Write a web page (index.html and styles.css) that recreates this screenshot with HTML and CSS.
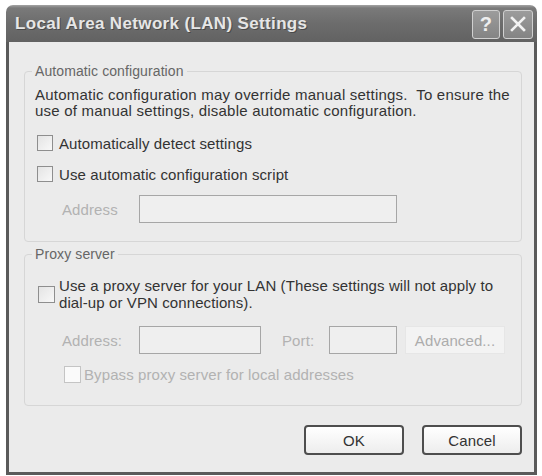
FILE: index.html
```html
<!DOCTYPE html>
<html lang="en">
<head>
<meta charset="utf-8">
<title>Local Area Network (LAN) Settings</title>
<link rel="stylesheet" href="styles.css">
</head>
<body>
<div class="window">
  <div class="titlebar">
    <span class="title">Local Area Network (LAN) Settings</span>
    <div class="caption-buttons">
      <span class="cap-btn cap-help">?</span>
      <span class="cap-btn cap-close">
        <svg width="18" height="18" viewBox="0 0 18 18"><path d="M3 3 L15 15 M15 3 L3 15" stroke="#f2f2f2" stroke-width="2.6" stroke-linecap="square"/></svg>
      </span>
    </div>
  </div>
  <div class="client">
    <fieldset class="group group-auto">
      <legend>Automatic configuration</legend>
      <p class="desc">Automatic configuration may override manual settings.&nbsp; To ensure the<br>use of manual settings, disable automatic configuration.</p>
      <label class="check check-detect"><span class="box"></span><span>Automatically detect settings</span></label>
      <label class="check check-script"><span class="box"></span><span>Use automatic configuration script</span></label>
      <div class="field-row row-script">
        <span class="lbl disabled lbl-addr">Address</span>
        <span class="input input-script"></span>
      </div>
    </fieldset>
    <fieldset class="group group-proxy">
      <legend>Proxy server</legend>
      <label class="check check-proxy"><span class="box"></span><span>Use a proxy server for your LAN (These settings will not apply to<br>dial-up or VPN connections).</span></label>
      <div class="field-row row-proxy">
        <span class="lbl disabled lbl-addr">Address:</span>
        <span class="input input-addr"></span>
        <span class="lbl disabled lbl-port">Port:</span>
        <span class="input input-port"></span>
        <span class="btn-adv">Advanced...</span>
      </div>
      <label class="check check-bypass disabled"><span class="box box-off"></span><span>Bypass proxy server for local addresses</span></label>
    </fieldset>
    <div class="buttons">
      <span class="btn">OK</span>
      <span class="btn">Cancel</span>
    </div>
  </div>
</div>
</body>
</html>
```

FILE: styles.css
```css
html, body {
  margin: 0;
  padding: 0;
  background: #ffffff;
}

body {
  font-family: "Liberation Sans", Arial, sans-serif;
  font-size: 15px;
  letter-spacing: 0.1px;
  color: #333333;
}

.window {
  margin: 5px 0 0 6px;
  width: 531px;
  height: 470px;
  display: flex;
  flex-direction: column;
}

.titlebar {
  flex: none;
  height: 37px;
  box-sizing: border-box;
  border-radius: 7px 7px 0 0;
  background: linear-gradient(to bottom, #a4a4a4 0, #7a7a7a 3px, #6c6c6c 50%, #626262 100%);
  display: flex;
  align-items: center;
  justify-content: space-between;
  padding: 0 4px 0 9px;
}

.title {
  font-weight: bold;
  font-size: 17px;
  color: #e6e6e6;
  text-shadow: 1px 1px 0 #4a4a4a;
  letter-spacing: 0.35px;
}

.caption-buttons {
  display: flex;
  gap: 3px;
  margin-top: 1px;
}

.cap-btn {
  width: 26px;
  height: 27px;
  border: 1px solid #d0d0d0;
  border-radius: 3px;
  background: linear-gradient(to bottom, #9c9c9c, #848484);
  display: flex;
  align-items: center;
  justify-content: center;
  color: #eeeeee;
  font-weight: bold;
  font-size: 20px;
}

.cap-close {
  width: 28px;
}

.client {
  flex: 1;
  background: #ebebeb;
  border: 3px solid #5a5a5a;
  border-top: 0;
  padding: 22px 12px 0 15px;
  display: flex;
  flex-direction: column;
}

.group {
  margin: 0;
  padding: 0 0 0 10px;
  border: 1px solid #d6d6d6;
  border-radius: 4px;
  min-width: 0;
  display: flex;
  flex-direction: column;
  align-items: flex-start;
}

.group legend {
  padding: 0 3px;
  margin-left: -3px;
  font-size: 14px;
  line-height: 14px;
  color: #666666;
}

.group-auto {
  padding-bottom: 18px;
}

.group-proxy {
  margin-top: 5px;
  padding-bottom: 21px;
}

.desc {
  margin: 9px 0 0 0;
  line-height: 16px;
  letter-spacing: 0.22px;
}

.check {
  display: flex;
  align-items: center;
  gap: 6px;
  height: 20px;
  margin-left: 2px;
}

.box {
  flex: none;
  width: 14px;
  height: 14px;
  border: 1px solid #8e8e8e;
  background: linear-gradient(135deg, #e4e4e4, #f8f8f8);
}

.check-detect { margin-top: 14px; }
.check-script { margin-top: 11px; }

.check-proxy {
  margin-top: 16px;
  margin-left: 3px;
  height: auto;
  line-height: 17px;
  gap: 4px;
}

.check-proxy .box {
  width: 15px;
  height: 15px;
}

.check-bypass {
  margin-top: 10px;
  margin-left: 29px;
  gap: 3px;
}

.box-off {
  width: 15px;
  height: 15px;
  border-color: #c4c4c4;
  background: #fafafa;
}

.disabled {
  color: #b2b2b2;
}

.field-row {
  display: flex;
  align-items: center;
  height: 28px;
}

.row-script { margin-top: 11px; }
.row-proxy { margin-top: 15px; }

.lbl-addr {
  margin-left: 27px;
  width: 77px;
}

.input {
  box-sizing: border-box;
  height: 28px;
  border: 1px solid #a6a6a6;
  background: #efefef;
}

.input-script { width: 258px; }
.input-addr { width: 122px; }

.lbl-port {
  margin-left: 21px;
  width: 47px;
}

.input-port { width: 68px; }

.btn-adv {
  margin-left: 8px;
  box-sizing: border-box;
  width: 100px;
  height: 28px;
  background: #f3f3f3;
  border: 1px solid #e6e6e6;
  color: #acacac;
  display: flex;
  align-items: center;
  justify-content: center;
}

.buttons {
  display: flex;
  justify-content: flex-end;
  gap: 18px;
  margin-top: 19px;
}

.btn {
  box-sizing: border-box;
  width: 100px;
  height: 30px;
  border: 2px solid #4e4e4e;
  border-radius: 4px;
  background: linear-gradient(to bottom, #ffffff, #ededed);
  display: flex;
  align-items: center;
  justify-content: center;
  color: #333333;
}
```
